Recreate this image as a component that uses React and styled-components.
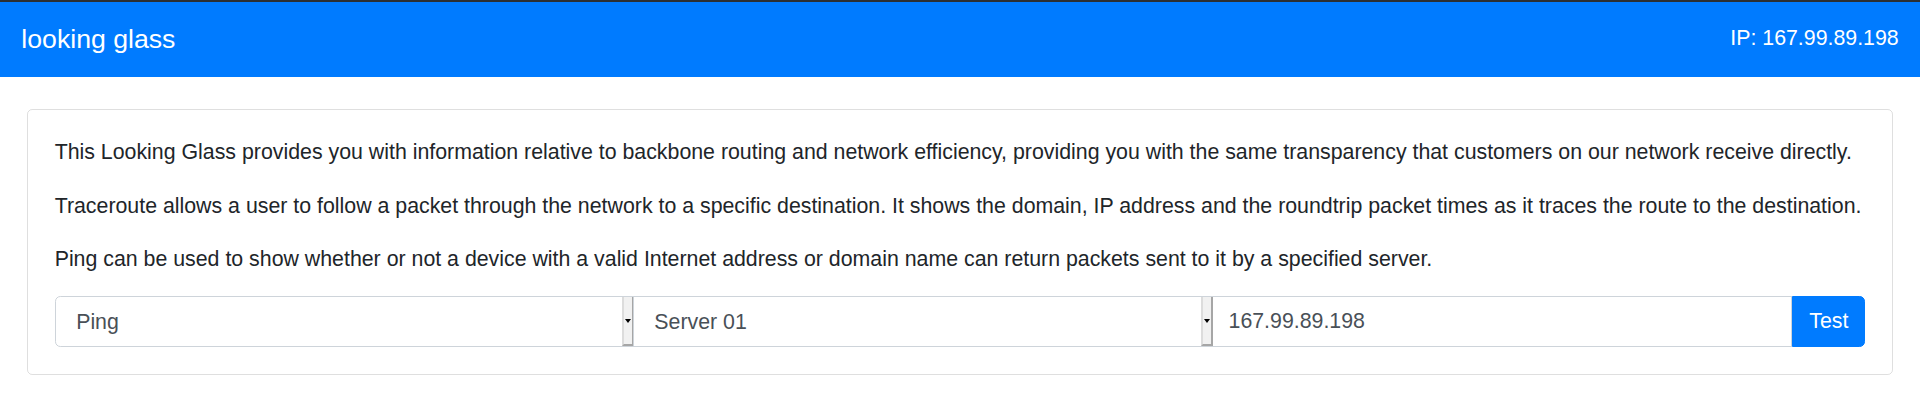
import { createGlobalStyle, styled } from 'styled-components';

const GlobalStyle = createGlobalStyle`
  body {
    margin: 0;
    font-family: "Liberation Sans", Arial, sans-serif;
    font-size: 21.33px;
    line-height: 1.5;
    color: #212529;
    background-color: #fff;
  }
`;

const Navbar = styled.nav`
  display: flex;
  align-items: center;
  justify-content: space-between;
  height: 74.67px;
  padding: 0 21.33px;
  border-top: 2px solid #2b2f33;
  background-color: #007bff;
  color: #fff;
`;

const Brand = styled.span`
  font-size: 26.67px;
  line-height: 1.5;
`;

const NavIp = styled.span`
  font-size: 21.33px;
`;

const Card = styled.div`
  margin: 32px 27px 0;
  padding: 26.67px;
  border: 1px solid rgba(0, 0, 0, 0.125);
  border-radius: 5.33px;
`;

const Text = styled.p`
  margin: 0 0 21.33px;
  line-height: 32px;
`;

const InputGroup = styled.form`
  display: grid;
  grid-template-columns: repeat(3, minmax(0, 1fr)) auto;
  height: 50.67px;
`;

const SelectWrap = styled.div`
  position: relative;
  display: flex;
  min-width: 0;
  margin-left: ${(p) => (p.$first ? '0' : '-1px')};
`;

const Field = styled.select`
  flex: 1;
  min-width: 0;
  height: 100%;
  appearance: none;
  padding: 0 16px 0 20.5px;
  font-family: inherit;
  font-size: 21.33px;
  color: #495057;
  background-color: #fff;
  border: 1px solid #ced4da;
  border-radius: ${(p) => (p.$first ? '5.33px 0 0 5.33px' : '0')};
  outline: none;
`;

const Arrow = styled.span`
  position: absolute;
  top: 1px;
  bottom: 1px;
  right: 0;
  width: 8px;
  display: flex;
  align-items: center;
  justify-content: center;
  background-color: #f1f1f1;
  border-left: 2px solid #dcdcdc;
  border-right: 2px solid #a6a6a6;
  border-bottom: 2px solid #a6a6a6;
  pointer-events: none;

  &::after {
    content: '';
    border-left: 3.5px solid transparent;
    border-right: 3.5px solid transparent;
    border-top: 4px solid #000;
    margin-top: 1px;
  }
`;

const Address = styled.input`
  min-width: 0;
  height: 100%;
  box-sizing: border-box;
  margin: 0 0 0 -1px;
  padding: 0 16px 0 15.5px;
  font-family: inherit;
  font-size: 21.33px;
  color: #495057;
  background-color: #fff;
  border: 1px solid #ced4da;
  border-radius: 0;
  outline: none;
`;

const TestButton = styled.button`
  height: 100%;
  margin: 0;
  padding: 0 16px;
  font-family: inherit;
  font-size: 21.33px;
  color: #fff;
  background-color: #007bff;
  border: 1px solid #007bff;
  border-radius: 0 5.33px 5.33px 0;
  cursor: pointer;
`;

function Select({ first, value, options }) {
  return (
    <SelectWrap $first={first}>
      <Field $first={first} defaultValue={value}>
        {options.map((o) => (
          <option key={o.value} value={o.value}>
            {o.label}
          </option>
        ))}
      </Field>
      <Arrow />
    </SelectWrap>
  );
}

export default function App() {
  return (
    <>
      <GlobalStyle />
      <Navbar>
        <Brand>looking glass</Brand>
        <NavIp>IP: 167.99.89.198</NavIp>
      </Navbar>
      <Card>
        <Text>
          This Looking Glass provides you with information relative to backbone routing and network efficiency, providing you with the same transparency that customers on our network receive directly.
        </Text>
        <Text>
          Traceroute allows a user to follow a packet through the network to a specific destination. It shows the domain, IP address and the roundtrip packet times as it traces the route to the destination.
        </Text>
        <Text>
          Ping can be used to show whether or not a device with a valid Internet address or domain name can return packets sent to it by a specified server.
        </Text>
        <InputGroup onSubmit={(e) => e.preventDefault()}>
          <Select
            first
            value="ping"
            options={[
              { value: 'ping', label: 'Ping' },
              { value: 'traceroute', label: 'Traceroute' },
            ]}
          />
          <Select value="server01" options={[{ value: 'server01', label: 'Server 01' }]} />
          <Address defaultValue="167.99.89.198" />
          <TestButton type="submit">Test</TestButton>
        </InputGroup>
      </Card>
    </>
  );
}
